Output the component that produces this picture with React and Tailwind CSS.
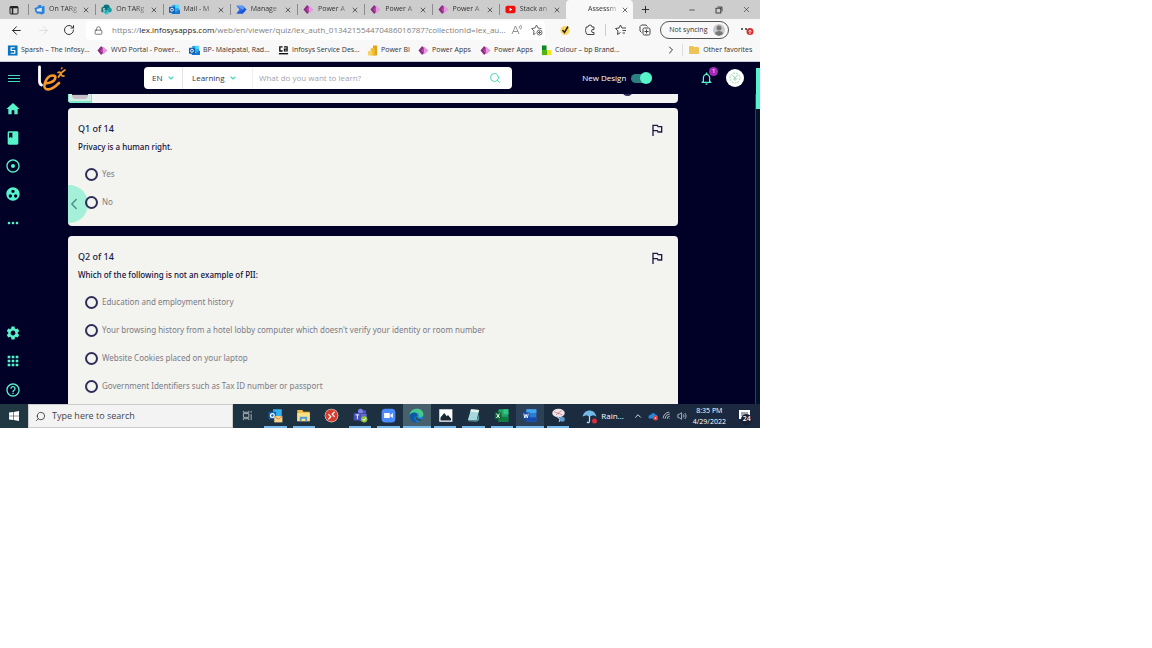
import React from "react";
import {
  MdHome, MdBook, MdAdjust, MdGroupWork, MdMoreHoriz, MdSettings, MdApps, MdHelpOutline,
  MdOutlinedFlag, MdNotificationsNone, MdFolder,
} from "react-icons/md";
import {
  ArrowLeft, ArrowRight, RotateCw, Lock, X, Plus, Minus, Search, ChevronDown, ChevronRight, ChevronLeft,
  ChevronUp, Wifi, Volume2,
} from "lucide-react";

const AzureIcon = () => (
  <svg viewBox="0 0 24 24" className="size-[11px] shrink-0">
    <path d="M1 9l7-3 2-4h6v4l7-2v16l-6 3-9-3v3l-5-6z" fill="#2b83d8" />
    <path d="M6 11l11-3v9l-11-1z" fill="#d9e6f2" />
  </svg>
);
const SharePointIcon = () => (
  <svg viewBox="0 0 24 24" className="size-[11px] shrink-0">
    <circle cx="12" cy="8" r="7" fill="#03787c" />
    <circle cx="18" cy="13" r="5.5" fill="#1a9ba1" />
    <circle cx="12" cy="18" r="5" fill="#37c6d0" />
    <rect x="1" y="7" width="11" height="11" rx="1" fill="#036c70" />
    <path d="M9 10H5v3h4v3H4" stroke="#fff" strokeWidth="1.5" fill="none" />
  </svg>
);
const OutlookIcon = () => (
  <svg viewBox="0 0 24 24" className="size-[11px] shrink-0">
    <rect x="7" y="2" width="15" height="14" fill="#28a8ea" />
    <rect x="14" y="2" width="8" height="7" fill="#50d9ff" />
    <path d="M6 12l9 5 9-5v10H6z" fill="#1577cf" />
    <rect x="0" y="6" width="13" height="13" rx="1" fill="#0a5fb4" />
    <circle cx="6.500" cy="12.500" r="3.200" stroke="#fff" strokeWidth="2" fill="none" />
  </svg>
);
const AutomateIcon = () => (
  <svg viewBox="0 0 24 24" className="size-[11px] shrink-0">
    <path d="M1 4h14l8 8-8 9H1l7-9z" fill="#1c56d8" />
    <path d="M1 4h14l4 4-5 5z" fill="#5b9bf5" />
    <path d="M1 4l7 8-7 9 13-8z" fill="#2f6ee8" />
  </svg>
);
const PowerAppsIcon = () => (
  <svg viewBox="0 0 24 24" className="size-[11px] shrink-0">
    <path d="M9 2l8 10-8 10-8-10z" fill="#8b2a83" />
    <path d="M14 4l9 8-9 8-6-8z" fill="#e39adb" />
    <path d="M13 4v16l-6-8z" fill="#b144a6" />
  </svg>
);
const YouTubeIcon = () => (
  <svg viewBox="0 0 24 24" className="size-[11px] shrink-0">
    <rect x="1" y="4" width="22" height="16" rx="4" fill="#f20d0d" />
    <path d="M10 8l6 4-6 4z" fill="#fff" />
  </svg>
);
const SparshIcon = () => (
  <svg viewBox="0 0 24 24" className="size-[11px] shrink-0">
    <rect x="2" y="1" width="21" height="22" fill="#0b74c0" />
    <path d="M17 6H9v6h8v6H8" stroke="#fff" strokeWidth="2.500" fill="none" />
  </svg>
);
const ServiceDeskIcon = () => (
  <svg viewBox="0 0 24 24" className="size-[11px] shrink-0">
    <path d="M10 4H4v9h6" stroke="#111" strokeWidth="3" fill="none" />
    <path d="M13 4h7v10M20 9h-6v4h6" stroke="#111" strokeWidth="2.500" fill="none" />
    <path d="M2 19h20" stroke="#111" strokeWidth="3" />
  </svg>
);
const PowerBiIcon = () => (
  <svg viewBox="0 0 24 24" className="size-[11px] shrink-0">
    <rect x="13" y="1" width="9" height="22" rx="1" fill="#e0a315" />
    <rect x="8" y="7" width="9" height="16" rx="1" fill="#f0bd35" />
    <rect x="2" y="13" width="9" height="10" rx="1" fill="#f5d266" />
  </svg>
);
const ColourIcon = () => (
  <svg viewBox="0 0 24 24" className="size-[11px] shrink-0">
    <path d="M2 1h10v10H2z" fill="#0d8a1f" />
    <path d="M2 11h12v11H2z" fill="#54b313" />
    <path d="M14 11h9v11h-9z" fill="#f2e61b" />
  </svg>
);

const tabs = [
  ["On TARg", AzureIcon],
  ["On TARg", SharePointIcon],
  ["Mail - M", OutlookIcon],
  ["Manage", AutomateIcon],
  ["Power A", PowerAppsIcon],
  ["Power A", PowerAppsIcon],
  ["Power A", PowerAppsIcon],
  ["Stack an", YouTubeIcon],
];

const bookmarks = [
  ["Sparsh – The Infosy...", SparshIcon, "w-[90px]"],
  ["WVD Portal - Power...", PowerAppsIcon, "w-[92px]"],
  ["BP- Malepatal, Rad...", OutlookIcon, "w-[89px]"],
  ["Infosys Service Des...", ServiceDeskIcon, "w-[89px]"],
  ["Power BI", PowerBiIcon, "w-[51px]"],
  ["Power Apps", PowerAppsIcon, "w-[62px]"],
  ["Power Apps", PowerAppsIcon, "w-[61px]"],
  ["Colour – bp Brand...", ColourIcon, "w-[89px]"],
];

const fade = "min-w-0 flex-1 whitespace-nowrap [mask-image:linear-gradient(to_right,black_65%,rgba(0,0,0,0.3))]";

function TabStrip() {
  return (
    <div className="flex h-[19px] items-stretch bg-[#cdcdcd] text-[7px] text-[#333]">
      <button aria-label="Tab actions" className="flex w-7 items-center justify-center">
        <svg viewBox="0 0 10 10" className="size-[10px]">
          <rect x="1" y="1.500" width="8" height="7.500" rx="1" fill="none" stroke="#222" />
          <path d="M1 2.500h8M3.500 3v6" stroke="#222" strokeWidth="1.500" />
        </svg>
      </button>
      <div className="flex min-w-0 flex-1">
        {tabs.map(([name, Icon], i) => (
          <div key={i} className="flex min-w-0 flex-1 items-center">
            <div className="flex w-full min-w-0 items-center gap-1 border-l border-[#8b8b8b] pl-[5px] pr-[5px]">
              <Icon />
              <a href="#tab" className={fade}>{name}</a>
              <button aria-label="Close tab"><X className="size-2 text-[#222]" /></button>
            </div>
          </div>
        ))}
        <div className="flex min-w-0 flex-1">
          <div className="flex w-full items-center gap-1 rounded-t bg-[#f8f8f8] pl-[22px] pr-1">
            <a href="#tab" className={fade}>Assessm</a>
            <button aria-label="Close tab"><X className="size-2 text-[#222]" /></button>
          </div>
        </div>
      </div>
      <div className="flex w-[127px] items-center text-[#222]">
        <button aria-label="New tab" className="flex w-6 justify-center"><Plus className="size-[11px]" /></button>
        <div className="flex-1" />
        <button aria-label="Minimize" className="flex w-[27px] justify-center"><Minus className="size-2" /></button>
        <button aria-label="Restore" className="flex w-[27px] justify-center">
          <svg viewBox="0 0 8 8" className="size-2" fill="none" stroke="#222" strokeWidth=".8">
            <rect x="1" y="2.200" width="4.800" height="4.800" /><path d="M2.500 1h4.500v4.500" />
          </svg>
        </button>
        <button aria-label="Close" className="flex w-7 justify-center"><X className="size-[9px]" strokeWidth={1.5} /></button>
      </div>
    </div>
  );
}

function Toolbar() {
  return (
    <div className="flex h-[22px] items-center bg-[#f8f8f8] text-[#444]">
      <div className="flex w-[86px] items-center justify-between pl-[10px] pr-[11px]">
        <button aria-label="Back"><ArrowLeft className="size-[13px] text-[#222]" strokeWidth={1.8} /></button>
        <button aria-label="Forward"><ArrowRight className="size-[13px] text-[#ddd]" strokeWidth={1.8} /></button>
        <button aria-label="Refresh"><RotateCw className="size-3 text-[#222]" strokeWidth={1.8} /></button>
      </div>
      <div className="flex h-[19px] min-w-0 flex-1 items-center rounded bg-white pl-2 pr-[2px]">
        <Lock className="size-[9px] shrink-0" strokeWidth={1.8} />
        <div className="min-w-0 flex-1 whitespace-nowrap pl-[9px] text-[8px] text-[#808080]">
          https://<span className="text-[#222]">lex.infosysapps.com</span>/web/en/viewer/quiz/lex_auth_013421554470486016787?collectionId=lex_au...
        </div>
        <button aria-label="Read aloud" className="flex w-5 shrink-0">
          <svg viewBox="0 0 12 12" className="size-3" fill="none" stroke="#777" strokeWidth=".8">
            <path d="M1 10l3.500-8L8 10M2.200 7.500h4.600M8 2q1 1 0 2.500M9.500 1q2 2 0 4.500" />
          </svg>
        </button>
        <button aria-label="Add to favorites" className="flex shrink-0">
          <svg viewBox="0 0 24 24" className="size-3" fill="none" stroke="#666" strokeWidth="2">
            <path d="M9 19l-4 2 1-7-5-5 7-1 3-6 3 6 7 1" /><circle cx="17" cy="17" r="5" /><path d="M17 14v6M14 17h6" />
          </svg>
        </button>
      </div>
      <div className="flex w-[115px] items-center justify-between pl-[14px] pr-[9px]">
        <button aria-label="Norton" className="flex">
          <svg viewBox="0 0 12 12" className="size-3">
            <circle cx="6" cy="6.500" r="4.500" fill="#fbd65d" /><path d="M3.500 6l2 2.500L9 2.500" stroke="#222" strokeWidth="1.500" fill="none" />
          </svg>
        </button>
        <button aria-label="Extensions" className="ml-1 flex">
          <svg viewBox="0 0 24 24" className="size-3" fill="none" stroke="#444" strokeWidth="2" strokeLinejoin="round">
            <path d="M4 9V6h4q0-4 4-4t4 4h4v5q-5-1-5 3t5 3v4H8q-4 0-4-4-2-4 0-8z" />
          </svg>
        </button>
        <span className="h-3 w-px bg-[#ccc]" />
        <button aria-label="Favorites" className="flex">
          <svg viewBox="0 0 24 24" className="size-3" fill="none" stroke="#444" strokeWidth="2">
            <path d="M11 17l-6 4 1-7-5-5 7-1 3-6 3 6h8M15 13h7M15 18h5" />
          </svg>
        </button>
        <button aria-label="Collections" className="ml-1 flex">
          <svg viewBox="0 0 24 24" className="size-3" fill="none" stroke="#444" strokeWidth="2">
            <path d="M5 17l-3-3V5l3-3h9l3 3" /><rect x="8" y="8" width="14" height="14" rx="3" /><path d="M15 11v8M11 15h8" />
          </svg>
        </button>
      </div>
      <button className="flex h-[18px] w-[69px] shrink-0 items-center justify-between whitespace-nowrap rounded-full border border-[#555] pl-2 pr-[3px] text-[7px] text-[#333]">
        Not syncing
        <svg viewBox="0 0 12 12" className="size-3 shrink-0">
          <circle cx="6" cy="6" r="6" fill="#c9c9c9" /><circle cx="6" cy="4" r="2.500" fill="#777" /><path d="M2 10c0-4 8-4 8 0l-4 2z" fill="#777" />
        </svg>
      </button>
      <button aria-label="Settings and more" className="flex w-[31px] justify-center pl-1">
        <svg viewBox="0 0 14 12" className="h-3 w-[14px]">
          <path d="M1 5h2M5 5h2" stroke="#333" strokeWidth="1.500" /><circle cx="10" cy="7.500" r="3.500" fill="#d62f2f" /><path d="M10 10V6M8.500 7.500L10 6l1.500 1.500" stroke="#fff" fill="none" strokeWidth=".8" />
        </svg>
      </button>
    </div>
  );
}

function Bookmarks() {
  return (
    <div className="flex h-[21px] items-center border-b border-[#c8ccd8] bg-[#f8f8f8] pb-[2px] pl-[7px] pr-2 text-[7px] text-[#333]">
      {bookmarks.map(([name, Icon, width], i) => (
        <a key={i} href="#bookmark" className={`flex shrink-0 items-center gap-[3px] whitespace-nowrap ${width}`}>
          <Icon />{name}
        </a>
      ))}
      <div className="flex-1" />
      <button aria-label="More favorites" className="mr-[5px] border-r border-[#ddd] pr-[5px]"><ChevronRight className="size-3" /></button>
      <a href="#favorites" className="flex items-center gap-[3px] whitespace-nowrap"><MdFolder className="size-3 text-[#efc457]" />Other favorites</a>
    </div>
  );
}

function Header() {
  return (
    <header className="flex h-8 items-center bg-[#010027] text-white">
      <button aria-label="Menu" className="flex w-[28px] justify-center">
        <svg viewBox="0 0 12 10" className="h-[10px] w-3" stroke="#45d9b5"><path d="M0 2.500h12M0 5.500h12M0 8.500h12" /></svg>
      </button>
      <a href="#home" aria-label="Lex" className="ml-[9px] flex w-[107px]">
        <svg viewBox="0 0 31 26" className="h-[26px] w-[31px]" fill="none" strokeLinecap="round">
          <path d="M2.500 2v14q0 3 2 4" stroke="#fff" strokeWidth="2.800" />
          <path d="M8.500 18.500q8-1 9.500-4.500t-2.500-3.500q-4.500 0-7 6t.5 7.500q5 2 13-6" stroke="#f59a23" strokeWidth="2.600" />
          <path d="M21 7.500q2.500-1 3 1.500t3 2M28 5q-4 2-6.500 7" stroke="#f59a23" strokeWidth="1.700" />
          <path d="M24.500 3.500l.5-.5" stroke="#f07c22" strokeWidth="1.700" />
        </svg>
      </a>
      <div className="flex h-[22px] min-w-0 max-w-[368px] flex-1 items-center rounded-sm bg-white text-[8px] text-[#33334d]">
        <button className="flex h-full w-[39px] items-center justify-between border-r border-[#e5e5e8] pl-2 pr-[7px]">EN<ChevronDown className="size-2 text-[#45d9b5]" strokeWidth={3.5} /></button>
        <button className="flex h-full w-[70px] items-center justify-between border-r border-[#f0f0f2] pl-[9px] pr-[15px]">Learning<ChevronDown className="size-2 text-[#45d9b5]" strokeWidth={3.5} /></button>
        <input aria-label="What do you want to learn?" placeholder="What do you want to learn?" className="min-w-0 flex-1 bg-transparent pl-[6px] outline-none placeholder:text-[#a3a3ae]" />
        <button aria-label="Search" className="mr-[11px]"><Search className="size-3 text-[#45d9b5]" /></button>
      </div>
      <label className="ml-auto flex items-center gap-[5px] whitespace-nowrap text-[8px]">
        New Design
        <span className="flex h-[9px] w-[21px] items-center justify-end rounded-full bg-[#2a8081]">
          <input type="checkbox" defaultChecked className="size-3 appearance-none rounded-full bg-[#57f3cb]" />
        </span>
      </label>
      <button aria-label="Notifications" className="relative ml-[47px]">
        <MdNotificationsNone className="size-[15px] text-[#57f3cb]" />
        <span className="absolute -right-1 -top-1 flex size-[9px] items-center justify-center rounded-full bg-[#a329bd] text-[6px]">1</span>
      </button>
      <button aria-label="Profile" className="ml-3 mr-4 flex size-[18px] items-center justify-center rounded-full bg-white">
        <svg viewBox="0 0 14 14" className="size-[14px]" fill="none" stroke="#9bd9ae"><circle cx="7" cy="7" r="5" strokeDasharray="2 1" /><path d="M4.500 4L7 7l2.500-3M7 7v3M5 8h4" /></svg>
      </button>
    </header>
  );
}

function SideNav() {
  const top = [["Home", MdHome], ["Learn", MdBook], ["Goals", MdAdjust], ["Groups", MdGroupWork], ["More", MdMoreHoriz]];
  const bottom = [["Settings", MdSettings], ["Apps", MdApps], ["Help", MdHelpOutline]];
  const item = ([name, Icon]) => (
    <a key={name} href="#nav" aria-label={name} className="flex flex-1 items-center justify-center"><Icon className="size-4" /></a>
  );
  return (
    <nav className="flex w-[26px] flex-col justify-between pt-px text-[#57f3cb]">
      <div className="flex h-[142px] flex-col">{top.map(item)}</div>
      <div className="flex h-[85px] flex-col">{bottom.map(item)}</div>
    </nav>
  );
}

function Question({ id, title, text, options, last }) {
  return (
    <section className={`bg-[#f3f3ef] pl-[10px] pr-[13px] pt-3 ${last ? "rounded-t-sm pb-1" : "rounded-sm pb-[10px]"}`}>
      <div className="flex h-[18px] items-center justify-between">
        <h2 className="text-[9px] font-medium text-[#1a1a45]">{title}</h2>
        <button aria-label="Flag question"><MdOutlinedFlag className="mt-[2px] size-4 text-[#1a1a45]" /></button>
      </div>
      <fieldset>
        <legend className="mb-1 h-[18px] text-[8px] font-medium leading-[18px] text-[#0f0f3c]">{text}</legend>
        {options.map((o) => (
          <label key={o} className="relative z-10 flex h-7 items-center gap-1 whitespace-nowrap pl-[7px] text-[8px] text-[#7c7c86]">
            <input type="radio" name={id} className="size-[13px] shrink-0 appearance-none rounded-full border-2 border-[#2e2e5a]" />
            {o}
          </label>
        ))}
      </fieldset>
    </section>
  );
}

function Quiz() {
  return (
    <div className="flex bg-[#010027] font-['Noto_Sans','Open_Sans',sans-serif]">
      <SideNav />
      <main className="relative ml-[42px] flex min-w-0 flex-1 flex-col">
        <div className="mb-[5px] flex h-[9px] items-start justify-between overflow-hidden rounded-b-sm bg-[#f3f3f3] pr-[45px]">
          <div className="flex h-[9px] w-6 justify-center border-x border-b-2 border-[#7be8ca] bg-[#d5ece6]">
            <span className="h-[5px] w-4 rounded-b-sm border-t border-[#1a1a45] bg-[#c5bcc4]" />
          </div>
          <span className="-mt-[9px] size-[11px] rounded-full border-2 border-[#2e2e5a]" />
        </div>
        <Question id="q1" title="Q1 of 14" text="Privacy is a human right." options={["Yes", "No"]} />
        <div className="h-[10px]" />
        <Question
          id="q2"
          title="Q2 of 14"
          text="Which of the following is not an example of PII:"
          last
          options={[
            "Education and employment history",
            "Your browsing history from a hotel lobby computer which doesn't verify your identity or room number",
            "Website Cookies placed on your laptop",
            "Government Identifiers such as Tax ID number or passport",
          ]}
        />
        <button aria-label="Collapse panel" className="absolute left-0 top-[91px] flex h-[38px] w-5 items-center rounded-r-full bg-[#a5f0d8]">
          <ChevronLeft className="-ml-[3px] size-[18px] text-[#4d8b83]" strokeWidth={1.8} />
        </button>
      </main>
      <div className="ml-[77px] w-[5px] border-l border-[#29435a] bg-[#011329]">
        <div className="mt-[-26px] h-[41px] bg-[#57f3cb]" />
      </div>
    </div>
  );
}

const S = ({ children }) => <svg viewBox="0 0 24 24" className="size-[15px]">{children}</svg>;

const apps = [
  ["Task view", <svg key="a" viewBox="0 0 24 24" className="size-[11px]"><path d="M3 2v3h12V2M3 22v-3h12v3M3 8h12v8H3zM20 2v4M20 9v13" stroke="#c3ccd0" strokeWidth="1.800" fill="none" /></svg>, ""],
  ["Outlook", <S key="b"><rect x="8" y="2" width="14" height="15" fill="#35b0ef" /><rect x="1" y="6" width="12" height="12" rx="1" fill="#0a62bd" /><circle cx="7" cy="12" r="3" stroke="#fff" strokeWidth="2" fill="none" /><path d="M10 13h13v10H10z" fill="#f9d18b" /><path d="M10 13l6.500 5 6.500-5" stroke="#d98225" fill="none" strokeWidth="1.500" /></S>, "open"],
  ["File Explorer", <S key="c"><path d="M2 3h8l2 3h10v15H2z" fill="#f0bc42" /><path d="M2 8h20v13H2z" fill="#fbe08a" /><path d="M6 21v-7h12v7h-3v-4H9v4z" fill="#4b9edb" /></S>, "open"],
  ["Remote", <S key="d"><circle cx="12" cy="12" r="11" fill="#e8ddd8" /><circle cx="12" cy="12" r="10" fill="#d63d2d" /><path d="M7 10l4 4-4 4M17 6l-4 4 4 4" stroke="#fff" strokeWidth="1.800" fill="none" /></S>, ""],
  ["Teams", <S key="e"><circle cx="18" cy="6" r="3" fill="#5059c9" /><circle cx="12" cy="5" r="4" fill="#7b83eb" /><path d="M8 9h14v9l-8 4-6-4z" fill="#6168d2" /><rect x="1" y="8" width="12" height="12" rx="1" fill="#464eb8" /><path d="M4 11h6M7 11v7" stroke="#fff" strokeWidth="1.500" /><circle cx="18" cy="18" r="5" fill="#8dc63f" /><path d="M15.500 18l2 2 3-4" stroke="#fff" fill="none" strokeWidth="1.500" /></S>, "open"],
  ["Zoom", <S key="f"><rect x="1" y="1" width="22" height="22" rx="6" fill="#4a8cff" /><path d="M5 8h9v8H5zM15 11l4-3v8l-4-3z" fill="#fff" /></S>, "open"],
  ["Edge", <S key="g"><circle cx="12" cy="12" r="11" fill="#1682d5" /><path d="M1 11C2-2 23-2 23 10c0 5-6 6-8 4 3-6-6-10-14-3z" fill="#46c98c" /><path d="M1 12c4-8 13-5 12 1-5-3-7 5 1 10C6 24 1 19 1 12z" fill="#0c59a4" /><path d="M12 10c-2 5 3 9 9 8l-3 3c-7 1-10-7-6-11z" fill="#274e5e" /></S>, "active"],
  ["Photos", <S key="h"><rect x="2" y="2" width="21" height="20" fill="#fff" /><path d="M4 20v-5l6-7 4 5 2-2 5 6v3z" fill="#182731" /></S>, "open"],
  ["Notepad", <S key="i"><path d="M8 2l13 1-4 17-14-1z" fill="#a6d9dc" /><path d="M8 2l13 1-1 4-13-1z" fill="#e5f3ee" /><path d="M3 19l14 1 4-11v10l-4 3-13-1z" fill="#5c929c" /></S>, "open"],
  ["Excel", <S key="j"><rect x="7" y="2" width="16" height="20" rx="1" fill="#21a366" /><path d="M15 2h8v8h-8z" fill="#33c481" /><path d="M7 14h16v8H7z" fill="#107c41" /><rect x="1" y="7" width="11" height="11" fill="#0b6634" /><path d="M4 9l5 7M9 9l-5 7" stroke="#fff" strokeWidth="1.600" /></S>, "open"],
  ["Word", <S key="k"><rect x="7" y="2" width="16" height="20" rx="1" fill="#2b7cd3" /><path d="M7 2h16v6H7z" fill="#41a5ee" /><path d="M7 15h16v7H7z" fill="#164cad" /><rect x="1" y="7" width="11" height="11" fill="#174ba8" /><path d="M3 9l1.500 7 2-6 2 6L10 9" stroke="#fff" strokeWidth="1.400" fill="none" /></S>, "dim"],
  ["Snip", <S key="l"><ellipse cx="12" cy="8" rx="10" ry="7" fill="#eee5e9" /><path d="M5 6l13 5M8 11l9-7" stroke="#d1727e" strokeWidth="1.200" /><path d="M9 13l8 7M17 13l-4 9" stroke="#b8cbe0" strokeWidth="2" /><circle cx="18" cy="18" r="4" fill="#5b9bd2" /></S>, "open"],
];

const appStyles = {
  "": "border-transparent",
  open: "border-[#76b9ed] mx-[3px]",
  active: "border-[#76b9ed] bg-[#48606c]",
  dim: "border-[#76b9ed] bg-[#2c4057]",
};

function Taskbar() {
  return (
    <footer className="flex h-6 items-stretch bg-linear-to-r from-[#1f3842] to-[#1b283f] text-white">
      <button aria-label="Start" className="flex w-7 items-center justify-center">
        <svg viewBox="0 0 10 10" className="size-[10px]" fill="#fff"><path d="M0 1.500l4-.5v3.700H0zM4.600 .9L10 0v4.700H4.600zM0 5.300h4V9l-4-.5zM4.600 5.300H10V10l-5.400-.9z" /></svg>
      </button>
      <label className="flex w-[205px] min-w-0 items-center gap-[6px] border border-[#ccc] bg-[#f3f3f3] pl-[6px] text-[#333]">
        <Search className="size-[11px] shrink-0 -scale-x-100" strokeWidth={1.8} />
        <input aria-label="Search" placeholder="Type here to search" className="min-w-0 flex-1 bg-transparent text-[9px] outline-none placeholder:text-[#444]" />
      </label>
      <div className="flex min-w-0 flex-1">
        {apps.map(([name, icon, state]) => (
          <div key={name} className="flex min-w-0 flex-1">
            <button aria-label={name} className={`flex min-w-0 flex-1 items-center justify-center border-b-2 ${appStyles[state]}`}>{icon}</button>
          </div>
        ))}
      </div>
      <div className="flex w-[188px] items-center pl-[10px] text-[8px]">
        <button className="flex w-[49px] items-center gap-1">
          <svg viewBox="0 0 24 24" className="size-[15px] shrink-0"><path d="M1 12C3-1 21-1 23 12l-5-2-6 2-5-2z" fill="#72b8e8" /><path d="M12 11v9q-1 3-4 1" stroke="#b9dcf2" strokeWidth="2" fill="none" /><circle cx="20" cy="19" r="4" fill="#d92f3c" /></svg>
          Rain...
        </button>
        <button aria-label="Hidden icons" className="flex w-[14px] justify-center"><ChevronUp className="size-[10px]" /></button>
        <button aria-label="OneDrive" className="flex w-[15px] justify-center">
          <svg viewBox="0 0 24 24" className="size-[10px]"><path d="M2 18Q-1 9 7 9q4-8 10-1 8 1 5 10z" fill="#2389dd" /><circle cx="18" cy="17" r="6" fill="#e0343c" /><path d="M16 15l4 4M20 15l-4 4" stroke="#fff" strokeWidth="2" /></svg>
        </button>
        <button aria-label="Network" className="flex w-[14px] justify-center"><Wifi className="size-[10px] -rotate-45" strokeWidth={1.5} /></button>
        <button aria-label="Volume" className="flex w-[15px] justify-center"><Volume2 className="size-[10px]" strokeWidth={1.5} /></button>
        <div className="flex w-10 flex-col items-center text-[7px] leading-[11px]"><time>8:35 PM</time><time>4/29/2022</time></div>
        <button aria-label="Action center" className="relative flex flex-1 justify-center">
          <svg viewBox="0 0 12 12" className="size-3"><path d="M0 0h11v9H5l-2 3V9H0z" fill="#fff" /><path d="M2 3h7M2 5h7" stroke="#455263" /></svg>
          <span className="absolute left-3 top-1 flex size-[11px] items-center justify-center rounded-full bg-[#182132] text-[7px] font-semibold">24</span>
        </button>
      </div>
    </footer>
  );
}

export default function App() {
  return (
    <div className="min-h-screen bg-white font-['Open_Sans','Noto_Sans',sans-serif]">
      <div className="w-[66%]">
        <TabStrip />
        <Toolbar />
        <Bookmarks />
        <Header />
        <Quiz />
        <Taskbar />
      </div>
    </div>
  );
}
